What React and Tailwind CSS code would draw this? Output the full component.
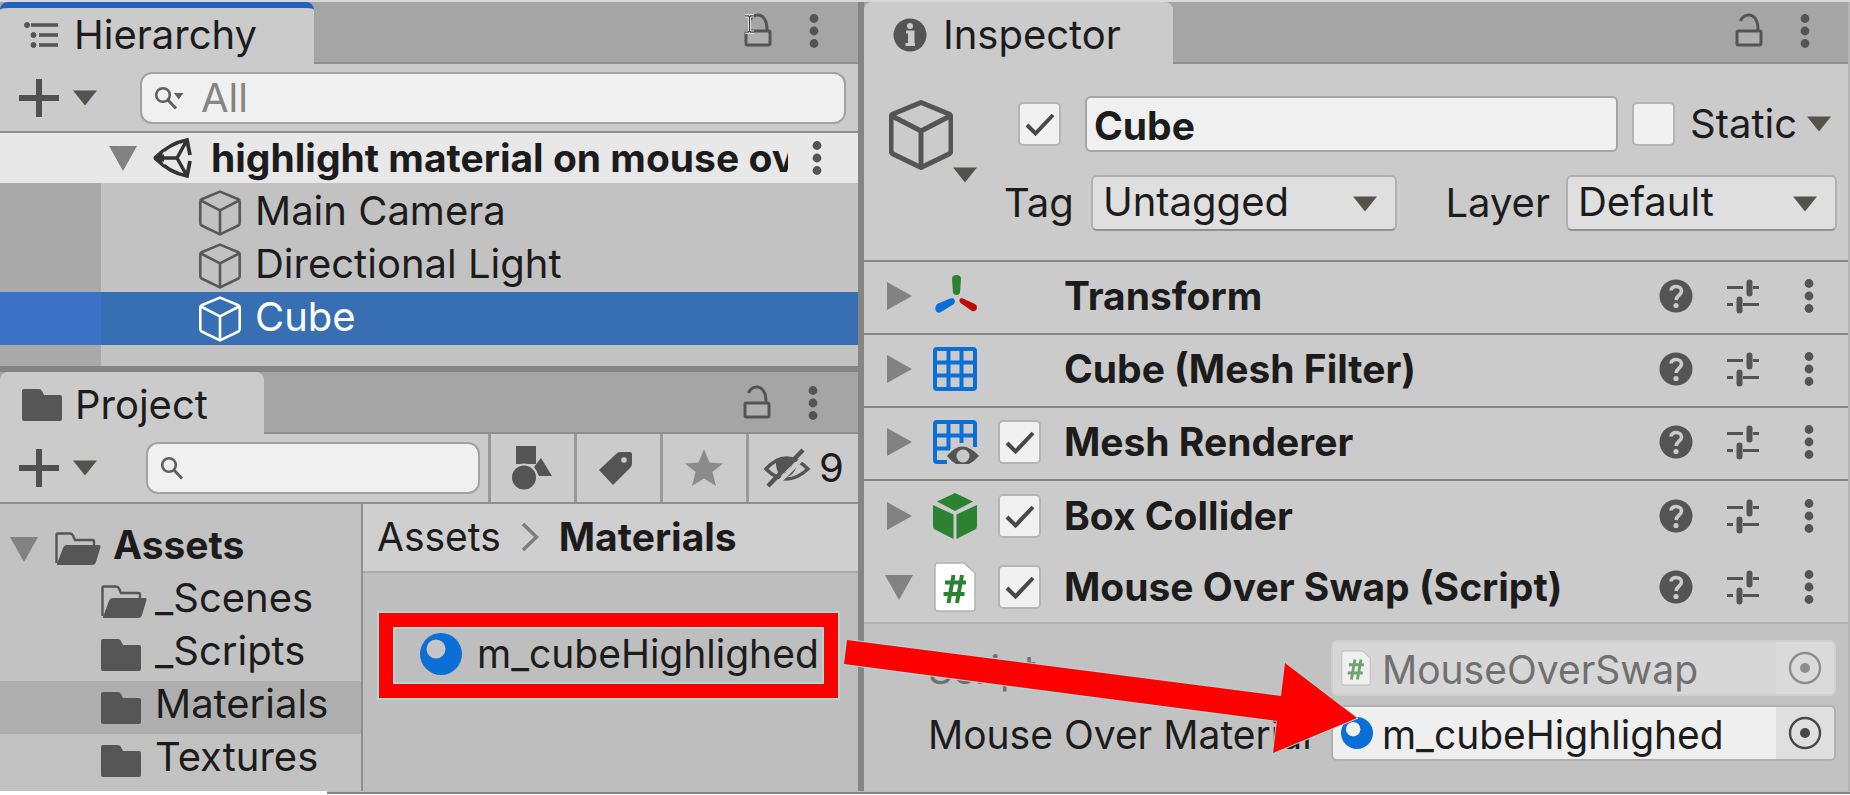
import React from "react";

const INK = "#545454";

function Caret({ className = "w-6 h-4", color = "#53534b" }) {
  return (
    <svg viewBox="0 0 24 15" className={`shrink-0 ${className}`} aria-hidden="true">
      <path d="M0 0H24L12 15Z" fill={color} />
    </svg>
  );
}

function Fold({ open }) {
  return (
    <svg viewBox="0 0 28 28" className="h-7 w-7 shrink-0" aria-hidden="true">
      <path d={open ? "M0 2H28L14 27Z" : "M2 0V28L27 14Z"} fill="#828282" />
    </svg>
  );
}

function Dots() {
  return (
    <svg viewBox="0 0 12 36" className="h-9 w-3" aria-hidden="true" fill={INK}>
      <circle cx="6" cy="5.5" r="4.4" />
      <circle cx="6" cy="18" r="4.4" />
      <circle cx="6" cy="30.5" r="4.4" />
    </svg>
  );
}

function Lock() {
  return (
    <svg viewBox="0 0 28 34" className="h-[34px] w-7" aria-hidden="true" fill="none" stroke={INK} strokeWidth="3">
      <rect x="2" y="18" width="24" height="14" rx="1.500" fill="#b0b0b0" />
      <path d="M5.500 8C8.500 0.500 17 .5 20.500 6C22.500 9 23 12 23 17" />
    </svg>
  );
}

function CubeOutline({ className, width = 4 }) {
  return (
    <svg viewBox="0 0 64 70" className={`shrink-0 ${className}`} aria-hidden="true" fill="none" stroke="currentColor" strokeWidth={width} strokeLinejoin="round">
      <path d="M32 2.500L60 14Q62 15 62 18V50Q62 53 60 54L32 67.500L4 54Q2 53 2 50V18Q2 15 4 14Z" />
      <path d="M3 16L32 31L61 16M32 31V67" />
    </svg>
  );
}

function Folder() {
  return (
    <svg viewBox="0 0 40 34" className="h-[34px] w-10 shrink-0" aria-hidden="true">
      <path d="M0 3Q0 1 2 1H17Q19 1 20 3L22 7H38Q40 7 40 9V31Q40 33 38 33H2Q0 33 0 31Z" fill="#565656" />
    </svg>
  );
}

function FolderOpen() {
  return (
    <svg viewBox="0 0 46 34" className="h-[34px] w-[46px] shrink-0" aria-hidden="true">
      <path d="M1.500 31V3Q1.500 1.500 3 1.500H15Q17 1.500 18 3.500L20 8H37.500Q39 8 39 9.500V13" fill="none" stroke="#565656" strokeWidth="2.400" />
      <path d="M2 32L8 16Q9 13 12 13H44Q46 13 45.500 15L41 30Q40 33 37 33H2Z" fill="#565656" />
    </svg>
  );
}

function Plus() {
  return (
    <svg viewBox="0 0 40 40" className="h-10 w-10" aria-hidden="true">
      <path d="M20 1V39M0 20H40" stroke="#505050" strokeWidth="6" fill="none" />
    </svg>
  );
}

function Material({ className, hole }) {
  return (
    <svg viewBox="0 0 42 42" className={`shrink-0 ${className}`} aria-hidden="true">
      <circle cx="21" cy="21" r="21" fill="#0a6fd6" />
      <circle cx="16" cy="16" r="9.500" fill={hole} />
    </svg>
  );
}

function ScriptFile({ className }) {
  return (
    <svg viewBox="0 0 42 50" className={`shrink-0 ${className}`} aria-hidden="true">
      <path d="M4 1H30L41 11V46Q41 49 38 49H4Q1 49 1 46V4Q1 1 4 1Z" fill="#fff" stroke="#b2b2b2" strokeWidth="1.500" />
      <path d="M19.500 13L14.500 41M28 13L23 41M11 20.500H32M9.500 32H30.500" stroke="#2c8230" strokeWidth="4" fill="none" />
    </svg>
  );
}

function Axes() {
  return (
    <svg viewBox="0 0 44 44" className="h-11 w-11" aria-hidden="true">
      <path d="M19 5Q19 1 23.500 1Q28 1 28 5L27 19Q26 21 23.500 21Q21 21 20 19Z" fill="#2c8230" />
      <path d="M20 24Q23 26 21 30L8 38Q4 40 2.500 36Q2 32 4 30L17 24.500Q19 24 20 24Z" fill="#0a6fd6" />
      <path d="M28 24Q25 26 27.500 29L39 37Q43 38 44 34Q44 31 42 30L30 24.500Z" fill="#bf0a0a" />
    </svg>
  );
}

function Mesh({ eye }) {
  return (
    <svg viewBox="0 0 46 44" className="h-11 w-[46px]" aria-hidden="true">
      <g fill="none" stroke="#0a6fd6" strokeWidth="4">
        {eye ? (
          <>
            <path d="M42 27V4Q42 2 40 2H4Q2 2 2 4V40Q2 42 4 42H14" />
            <path d="M15.500 2V29M28.500 2V23M2 15.500H42M2 28.500H17" />
          </>
        ) : (
          <>
            <rect x="2" y="2" width="40" height="40" rx="2" />
            <path d="M15.500 2V42M28.500 2V42M2 15.500H42M2 28.500H42" />
          </>
        )}
      </g>
      {eye && (
        <>
          <path d="M14 36Q29 17 46 36Q29 55 14 36Z" fill="#545454" />
          <circle cx="30" cy="36" r="6.500" fill="#c8c8c8" />
        </>
      )}
    </svg>
  );
}

function GreenBox() {
  return (
    <svg viewBox="0 0 44 46" className="h-[46px] w-11" aria-hidden="true" fill="#2c8230">
      <path d="M22 0L40 8.500L22 18L4 8.500Z" />
      <path d="M0 12L20.500 21.500V46L3 37Q0 36 0 33Z" />
      <path d="M44 12L23.500 21.500V46L41 37Q44 36 44 33Z" />
    </svg>
  );
}

function Help() {
  return (
    <svg viewBox="0 0 34 34" className="h-[34px] w-[34px]" aria-hidden="true">
      <circle cx="17" cy="17" r="16.500" fill={INK} />
      <path d="M12 11.500C12 6 22.500 6 22.500 12C22.500 16 17.500 16 17 21" fill="none" stroke="#cbcbcb" strokeWidth="3.600" />
      <circle cx="17" cy="26.500" r="2.600" fill="#cbcbcb" />
    </svg>
  );
}

function Presets() {
  return (
    <svg viewBox="0 0 34 36" className="h-9 w-[34px]" aria-hidden="true" fill="none" stroke={INK}>
      <path d="M1 9.500H17M27 9.500H33M1 26.500H7M17 26.500H33" strokeWidth="2.800" />
      <path d="M23.500 4.500V15.500M13.500 21.500V32.500" strokeWidth="6" strokeLinecap="round" />
    </svg>
  );
}

function Target({ color }) {
  return (
    <svg viewBox="0 0 34 34" className="h-[34px] w-[34px]" aria-hidden="true">
      <circle cx="17" cy="17" r="15" fill="none" stroke={color} strokeWidth="2.400" />
      <circle cx="17" cy="17" r="5" fill={color} />
    </svg>
  );
}

function Magnifier({ menu }) {
  return (
    <svg viewBox="0 0 30 24" className="h-6 w-[30px] shrink-0" aria-hidden="true">
      <circle cx="9" cy="9" r="6.800" fill="none" stroke="#606060" strokeWidth="2.600" />
      <path d="M13.500 13.500L22 22.500" stroke="#606060" strokeWidth="3" />
      {menu && <path d="M20 7H29.500L24.700 13.500Z" fill="#606060" />}
    </svg>
  );
}

function PanelHeader({ title, icon, active, tabClass, toolsClass = "pt-[11px] pr-[38px]" }) {
  return (
    <header className="flex h-[62px] items-stretch bg-[#a5a5a5] shadow-[inset_0_-2px_0_#8e8e8e]">
      <div role="tab" className={`flex items-center rounded-t-lg bg-[#cbcbcb] ${tabClass} ${active ? "border-t-[6px] border-[#1f63bd] pb-[2px]" : "pt-1"}`}>
        {icon}
        <h2 className="font-normal">{title}</h2>
      </div>
      <div className={`ml-auto flex items-start gap-9 ${toolsClass}`}>
        <button aria-label={`Lock ${title}`}><Lock /></button>
        <button aria-label={`${title} menu`}><Dots /></button>
      </div>
    </header>
  );
}

function AddButton({ label }) {
  return (
    <button aria-label={label} className="flex shrink-0 items-center gap-[14px]">
      <Plus />
      <Caret />
    </button>
  );
}

function Check({ label, checked }) {
  return (
    <span className="relative inline-flex h-11 w-[43px] shrink-0">
      <input type="checkbox" aria-label={label} defaultChecked={checked} className="peer h-full w-full appearance-none rounded-[5px] border-2 border-[#b4b4b4] bg-[#f1f1f1]" />
      <svg viewBox="0 0 43 44" aria-hidden="true" className="pointer-events-none invisible absolute inset-0 peer-checked:visible">
        <path d="M9 23L17.500 31.500L35 13" fill="none" stroke="#484848" strokeWidth="4" />
      </svg>
    </span>
  );
}

function Dropdown({ id, value, className }) {
  return (
    <span className={`relative flex ${className}`}>
      <select id={id} defaultValue={value} className="h-14 w-full appearance-none rounded-md border-2 border-[#b0b0b0] border-b-[#909090] bg-[#dfdfdf] pr-12 pb-[3px] pl-[10px]">
        <option>{value}</option>
      </select>
      <span className="pointer-events-none absolute top-[21px] right-5"><Caret /></span>
    </span>
  );
}

function TreeRow({ name, open, selected }) {
  return (
    <li className={`h-[53px] ${selected ? "bg-[#aeaeae]" : ""}`}>
      <button className="flex h-full w-full items-center pl-[101px] text-left">
        <span className="flex w-[54px] items-center">{open ? <FolderOpen /> : <Folder />}</span>
        <span className="pb-2">{name}</span>
      </button>
    </li>
  );
}

function ObjectRow({ name, selected }) {
  return (
    <li className={`flex h-[53px] ${selected ? "bg-[#386fb3] text-white" : ""}`}>
      <span className={`w-[101px] shrink-0 ${selected ? "bg-[#3d73c6]" : ""}`} />
      <button className="flex flex-1 items-center gap-[13px] pl-[97px] text-left">
        <span className={`flex ${selected ? "text-white" : "text-[#585858]"}`}>
          <CubeOutline className="h-[46px] w-11" />
        </span>
        <span className="pb-1">{name}</span>
      </button>
    </li>
  );
}

function ComponentRow({ name, icon, check, open, line, height = "h-[73px]" }) {
  return (
    <li className={`flex items-center pr-[33px] pb-[3px] pl-[21px] ${height} ${line ? "border-b-2 border-[#858585]" : ""}`}>
      <button aria-label={`Fold ${name}`} aria-expanded={!!open} className="w-12"><Fold open={open} /></button>
      <span className="flex w-[65px] items-center">{icon}</span>
      <span className="flex w-[66px] items-center">{check && <Check label={`Enable ${name}`} checked />}</span>
      <h3 className="flex-1 text-[39px] font-bold whitespace-nowrap">{name}</h3>
      <div className="flex items-center">
        <button aria-label={`${name} help`} className="mr-[33px]"><Help /></button>
        <button aria-label={`${name} presets`} className="mr-[43px]"><Presets /></button>
        <button aria-label={`${name} menu`}><Dots /></button>
      </div>
    </li>
  );
}

function ObjectField({ id, label, value, icon, disabled }) {
  return (
    <div className={`flex items-center pr-3 pl-16 text-[39px] ${disabled ? "text-[#707070]" : ""}`}>
      <label htmlFor={id} className="w-[403px] shrink-0 pt-[3px] whitespace-nowrap">{label}</label>
      <div className={`flex h-[56px] min-w-0 flex-1 items-center overflow-hidden rounded-md border-2 ${disabled ? "border-[#d0d0d0] bg-[#d7d7d7]" : "border-[#b0b0b0] bg-[#efefef]"}`}>
        <span className="flex w-[49px] shrink-0 items-center pl-2">{icon}</span>
        <input id={id} readOnly disabled={disabled} defaultValue={value} className="min-w-0 flex-1 bg-transparent pt-[3px]" />
        <button disabled={disabled} aria-label={`Choose ${label}`} className={`flex h-full w-[58px] items-center justify-center ${disabled ? "bg-[#dadada]" : "bg-[#dfdfdf]"}`}>
          <Target color={disabled ? "#8c8c8c" : "#484848"} />
        </button>
      </div>
    </div>
  );
}

function Hierarchy() {
  return (
    <section className="border-b-[6px] border-[#858585]">
      <PanelHeader
        title="Hierarchy"
        active
        tabClass="w-[314px] pl-[23px] gap-[15px]"
        icon={
          <svg viewBox="0 0 36 28" className="h-7 w-9" aria-hidden="true" stroke={INK} fill={INK}>
            <path d="M8 4H35M16 14H35M16 24H35" strokeWidth="3.600" />
            <circle cx="4" cy="4" r="2.500" /><circle cx="10.500" cy="14" r="2.500" /><circle cx="10.500" cy="24" r="2.500" />
          </svg>
        }
      />
      <div className="flex h-[69px] items-center border-b-2 border-[#8e8e8e] bg-[#cbcbcb] pr-3 pl-[19px]">
        <AddButton label="Create object" />
        <label className="ml-[43px] flex h-[52px] min-w-0 flex-1 items-center gap-[17px] rounded-xl border-2 border-[#a2a2a2] bg-[#f0f0f0] pl-3">
          <Magnifier menu />
          <input aria-label="Search hierarchy" placeholder="All" className="min-w-0 flex-1 bg-transparent placeholder:text-[#858585]" />
        </label>
      </div>
      <div className="flex h-[50px] items-center bg-[#e8e8e8] pr-[35px] pl-[109px]">
        <Fold open />
        <svg viewBox="0 0 40 42" className="ml-[15px] h-[42px] w-10 shrink-0" aria-hidden="true" fill="none" stroke="#333333">
          <path d="M3 21Q18 6 35 3L38 18M3 21Q18 36 35 39L38 24" strokeWidth="3.800" />
          <path d="M3 21H25M25 21L35 3M25 21L35 39" strokeWidth="3.500" />
          <path d="M1 21L12 12V30Z" fill="#333333" stroke="none" />
          <path d="M12 14.500L20 17.500H10ZM12 27.500L20 24.500H10Z" fill="#e8e8e8" stroke="none" />
        </svg>
        <h3 className="ml-[19px] min-w-0 flex-1 overflow-hidden text-[39px] font-bold whitespace-nowrap">highlight material on mouse over</h3>
        <button aria-label="Scene menu" className="ml-[23px]"><Dots /></button>
      </div>
      <ul className="bg-[linear-gradient(90deg,#aaaaaa_101px,#c2c2c2_101px)] pt-[3px] pb-[21px]">
        <ObjectRow name="Main Camera" />
        <ObjectRow name="Directional Light" />
        <ObjectRow name="Cube" selected />
      </ul>
    </section>
  );
}

function Project() {
  const tool = "flex shrink-0 items-center justify-center border-l-[3px] border-[#9a9a9a]";
  return (
    <section className="flex flex-1 flex-col">
      <PanelHeader title="Project" tabClass="w-[264px] pl-[22px] gap-[13px]" toolsClass="pt-[13px] pr-[39px]" icon={<Folder />} />
      <div className="flex h-[70px] items-stretch border-b-2 border-[#8e8e8e] bg-[#cbcbcb] pl-[19px]">
        <AddButton label="Create asset" />
        <label className="my-auto mr-2 ml-[49px] flex h-[52px] min-w-0 flex-1 items-center rounded-xl border-2 border-[#a2a2a2] bg-[#f0f0f0] pl-3">
          <Magnifier />
          <input aria-label="Search project" className="min-w-0 flex-1 bg-transparent" />
        </label>
        <button aria-label="Search by type" className={`w-[86px] ${tool}`}>
          <svg viewBox="0 0 40 44" className="h-11 w-10" aria-hidden="true" fill={INK}>
            <path d="M4 0H24V18H4ZM29 12L40 30H27L22 21Z" />
            <circle cx="12" cy="31.500" r="13" stroke="#cbcbcb" strokeWidth="2" />
          </svg>
        </button>
        <button aria-label="Search by label" className={`w-[86px] pr-1 ${tool}`}>
          <svg viewBox="0 0 34 34" className="h-[34px] w-[34px]" aria-hidden="true">
            <path d="M0 19L17 3Q19 1 21 1H31Q33 1 33 3V13Q33 15 31 17L14 34Z" fill={INK} />
            <circle cx="25" cy="9" r="2.800" fill="#cbcbcb" />
          </svg>
        </button>
        <button aria-label="Favorites" className={`w-[86px] ${tool}`}>
          <svg viewBox="0 0 40 38" className="h-[38px] w-10" aria-hidden="true" fill="#8b8b8b">
            <path d="M20 0L25.500 13.500L39 14.500L28.500 23L32 37L20 29.500L8 37L11.500 23L1 14.500L14.500 13.500Z" />
          </svg>
        </button>
        <button aria-label="Hidden packages" className={`w-[112px] gap-2 ${tool}`}>
          <svg viewBox="0 0 48 40" className="h-10 w-12" aria-hidden="true" fill="none" stroke={INK}>
            <path d="M3 21Q23-1 45 21Q23 41 3 21Z" strokeWidth="3.400" />
            <path d="M13 11Q23 7 34 12L17 28Q12 20 13 11Z" fill={INK} stroke="none" />
            <path d="M22 27Q29 25 31 18" strokeWidth="5" />
            <path d="M10 40L44 6" stroke="#cbcbcb" strokeWidth="4" />
            <path d="M5 38L40 2" strokeWidth="4.500" />
          </svg>
          <span>9</span>
        </button>
      </div>
      <div className="flex flex-1">
        <ul className="w-[363px] border-r-2 border-[#8e8e8e] bg-[#c2c2c2] pt-[18px]">
          <li className="h-[53px]">
            <button className="flex h-full w-full items-center pl-[10px] text-left text-[39px] font-bold">
              <Fold open />
              <span className="mr-3 ml-[17px] flex"><FolderOpen /></span>
              <span className="pb-2">Assets</span>
            </button>
          </li>
          <TreeRow name="_Scenes" open />
          <TreeRow name="_Scripts" />
          <TreeRow name="Materials" selected />
          <TreeRow name="Textures" />
        </ul>
        <div className="flex flex-1 flex-col bg-[#bebebe]">
          <nav aria-label="Asset path" className="flex h-[69px] items-center gap-5 border-b-2 border-[#a9a9a9] bg-[#cfcfcf] pb-[2px] pl-[14px] text-[39px]">
            <a href="#assets">Assets</a>
            <svg viewBox="0 0 18 28" className="h-7 w-[18px]" aria-hidden="true" fill="none" stroke="#7e7e7e" strokeWidth="3.500">
              <path d="M2 1L15.500 14L2 27" />
            </svg>
            <a href="#materials" className="font-bold">Materials</a>
          </nav>
          <button className="mt-10 mr-5 ml-4 flex h-[85px] items-center gap-[15px] border-[14px] border-[#ff0000] pb-[3px] pl-[27px] text-[39px] shadow-[0_0_0_2px_#abd9d6,inset_0_0_0_2px_#abd9d6]">
            <Material className="h-[42px] w-[42px]" hole="#c6c6c6" />
            m_cubeHighlighed
          </button>
        </div>
      </div>
    </section>
  );
}

function Inspector() {
  return (
    <section className="flex min-w-0 flex-1 flex-col border-r-2 border-[#b4b4b4] bg-[#cbcbcb]">
      <PanelHeader
        title="Inspector"
        tabClass="w-[309px] pl-[29px] gap-4"
        toolsClass="pt-[11px] pr-[37px]"
        icon={
          <svg viewBox="0 0 34 34" className="h-[34px] w-[34px]" aria-hidden="true">
            <circle cx="17" cy="17" r="16.500" fill={INK} />
            <circle cx="17" cy="8" r="3" fill="#cbcbcb" />
            <path d="M13 14H20V25M12.500 26.500H22" fill="none" stroke="#cbcbcb" strokeWidth="3" />
            <path d="M17.500 14V26" stroke="#cbcbcb" strokeWidth="5" />
          </svg>
        }
      />
      <div className="flex h-[198px] border-b-2 border-[#858585] pt-8 pr-[11px] pl-[25px]">
        <button aria-label="Choose object icon" className="flex h-[87px] w-[115px] shrink-0 items-end text-[#545454]">
          <span className="h-[83px]"><CubeOutline className="h-[70px] w-16" width={5} /></span>
          <Caret />
        </button>
        <div className="flex min-w-0 flex-1 flex-col gap-[23px]">
          <div className="flex items-center">
            <span className="ml-[14px] flex"><Check label="Active" checked /></span>
            <input aria-label="Object name" defaultValue="Cube" className="ml-6 h-14 min-w-0 flex-1 rounded-md border-2 border-[#a4a4a4] bg-[#f0f0f0] pt-[2px] pl-[7px] text-[39px] font-bold" />
            <span className="mr-[15px] ml-[14px] flex"><Check label="Static" /></span>
            <button className="flex items-center gap-[10px] pr-[6px]">Static<Caret /></button>
          </div>
          <div className="flex items-center">
            <label htmlFor="tag" className="w-[87px] shrink-0">Tag</label>
            <Dropdown id="tag" value="Untagged" className="w-[306px]" />
            <label htmlFor="layer" className="ml-auto pr-4 pl-4">Layer</label>
            <Dropdown id="layer" value="Default" className="w-[271px]" />
          </div>
        </div>
      </div>
      <ul>
        <ComponentRow name="Transform" icon={<Axes />} line />
        <ComponentRow name="Cube (Mesh Filter)" icon={<Mesh />} line />
        <ComponentRow name="Mesh Renderer" icon={<Mesh eye />} check line />
        <ComponentRow name="Box Collider" icon={<GreenBox />} check />
        <ComponentRow name="Mouse Over Swap (Script)" icon={<ScriptFile className="h-[50px] w-[44px]" />} check open height="h-[68px]" />
      </ul>
      <div className="flex flex-1 flex-col gap-[9px] border-t-2 border-[#b2b2b2] bg-[#c2c2c2] pt-4 pb-[30px]">
        <ObjectField id="script" label="Script" value="MouseOverSwap" disabled icon={<span className="opacity-60"><ScriptFile className="h-9 w-[30px]" /></span>} />
        <ObjectField id="material" label="Mouse Over Material" value="m_cubeHighlighed" icon={<Material className="h-8 w-8" hole="#efefef" />} />
      </div>
    </section>
  );
}

export default function App() {
  return (
    <main className="relative flex min-h-screen flex-col bg-white font-[Inter,'Liberation_Sans',sans-serif] text-[40px] leading-[48px] text-[#1c1c1c]">
      <div className="flex flex-1 border-t-2 border-[#d8d8d8]">
        <div className="flex w-[46.7%] shrink-0 flex-col border-r-[6px] border-[#858585]">
          <Hierarchy />
          <Project />
        </div>
        <Inspector />
      </div>
      <footer className="flex h-[5px] items-start">
        <span className="h-full w-[327px]" />
        <span className="h-[3px] flex-1 border-b-2 border-[#858585] bg-[#bebebe]" />
      </footer>
      <svg viewBox="0 0 24 32" className="pointer-events-none absolute top-[14px] left-[742px] h-5 w-[15px]" aria-hidden="true" fill="none">
        <path d="M5 3H10L12 5L14 3H19M12 5V27M5 29H10L12 27L14 29H19" stroke="#f4f4f4" strokeWidth="5" />
        <path d="M5 3H10L12 5L14 3H19M12 5V27M5 29H10L12 27L14 29H19" stroke="#3a3a3a" strokeWidth="2" />
      </svg>
      <svg viewBox="0 0 514 114" className="pointer-events-none absolute top-[640px] left-[844px] h-[114px] w-[514px]" aria-hidden="true">
        <path d="M3 0L437 56L441 23L513 78L429 113L433 81L0 24Z" fill="#ff0000" stroke="#abd9d6" strokeWidth="2" paintOrder="stroke" />
      </svg>
    </main>
  );
}
